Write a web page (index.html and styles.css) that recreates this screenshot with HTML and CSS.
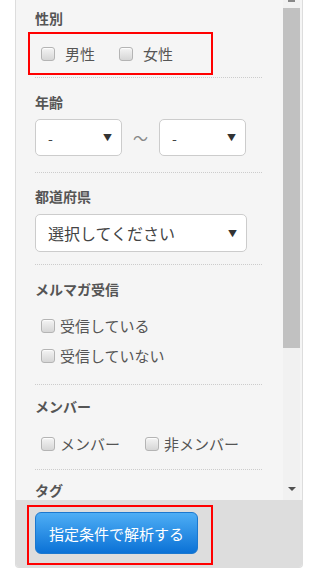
FILE: index.html
```html
<!DOCTYPE html>
<html lang="ja">
<head>
  <meta charset="UTF-8" />
  <meta name="viewport" content="width=device-width, initial-scale=1.0"/>
  <title>解析条件</title>
  <link rel="stylesheet" href="styles.css">
</head>
<body>

<div class="panel">
  <div class="scroll-area">
    <div class="filters">

      <div class="field field-first">
        <h3>性別</h3>
        <div class="highlight gender">
          <label class="check"><span class="box"></span>男性</label>
          <label class="check"><span class="box"></span>女性</label>
        </div>
      </div>

      <div class="field">
        <h3>年齢</h3>
        <div class="range">
          <div class="select small"><span>-</span><span class="arrow">▼</span></div>
          <span class="tilde">～</span>
          <div class="select small"><span>-</span><span class="arrow">▼</span></div>
        </div>
      </div>

      <div class="field field-pref">
        <h3>都道府県</h3>
        <div class="select wide"><span>選択してください</span><span class="arrow">▼</span></div>
      </div>

      <div class="field field-checks">
        <h3>メルマガ受信</h3>
        <div class="checks">
          <label class="check"><span class="box"></span>受信している</label>
          <label class="check"><span class="box"></span>受信していない</label>
        </div>
      </div>

      <div class="field field-member">
        <h3>メンバー</h3>
        <div class="checks inline">
          <label class="check"><span class="box"></span>メンバー</label>
          <label class="check"><span class="box"></span>非メンバー</label>
        </div>
      </div>

      <div class="field field-last">
        <h3>タグ</h3>
      </div>

    </div>

    <div class="scrollbar">
      <div class="sb-up"></div>
      <div class="sb-thumb"></div>
      <div class="sb-rest"><span class="sb-down"></span></div>
    </div>
  </div>

  <div class="panel-footer">
    <div class="highlight submit-wrap">
      <button type="button" class="submit">指定条件で解析する</button>
    </div>
  </div>
</div>

</body>
</html>
```

FILE: styles.css
```css
body {
  margin: 0;
  background: #fff;
  font-family: "Noto Sans CJK JP", "Noto Sans", sans-serif;
  color: #555;
}

.panel {
  width: 286px;
  margin-left: 15px;
  border: 1px solid #ddd;
  border-top: none;
  border-radius: 0 0 4px 4px;
  background: #f5f5f5;
  overflow: hidden;
}

.scroll-area {
  display: flex;
  height: 500px;
}

.filters {
  width: 267px;
  overflow: hidden;
}

.field {
  margin: 0 21px 0 19px;
  padding: 14px 0 16px;
  border-bottom: 1px dotted #ccc;
}

.field h3 {
  margin: 0 0 7px;
  font-size: 14px;
  line-height: 20px;
  font-weight: bold;
  color: #555;
}

.field-first {
  padding-top: 8px;
  padding-bottom: 2px;
}

.field-first h3 {
  margin-bottom: 4px;
}

.field-pref {
  padding-top: 13px;
  padding-bottom: 12px;
}

.field-pref h3 {
  margin-bottom: 8px;
}

.field-checks {
  padding-bottom: 13px;
}

.field-member {
  padding-top: 11px;
  padding-bottom: 10px;
}

.field-last {
  border-bottom: none;
  padding-top: 10px;
}

.highlight {
  border: 2px solid #f00;
}

.gender {
  display: flex;
  gap: 24px;
  box-sizing: border-box;
  width: 185px;
  height: 43px;
  margin-left: -7px;
  padding-left: 11px;
  align-items: center;
}

.gender .check {
  gap: 10px;
}

.check {
  display: flex;
  align-items: center;
  gap: 5px;
  font-size: 15px;
  line-height: 30px;
  color: #555;
}

.box {
  width: 12px;
  height: 12px;
  border: 1px solid #b4b4b4;
  border-radius: 3px;
  background: linear-gradient(#f4f4f4, #d6d6d6);
  box-shadow: inset 0 1px 1px rgba(255, 255, 255, 0.8);
}

.checks {
  padding: 5px 0 0 6px;
}

.checks.inline {
  display: flex;
  gap: 25px;
  padding-top: 6px;
}

.range {
  display: flex;
  align-items: center;
  gap: 11px;
}

.select {
  display: flex;
  align-items: center;
  justify-content: space-between;
  box-sizing: border-box;
  border: 1px solid #ccc;
  border-radius: 5px;
  background: #fff;
  padding: 0 9px 0 12px;
  color: #444;
}

.select.small {
  width: 87px;
  height: 37px;
  font-size: 14px;
}

.select.wide {
  width: 212px;
  height: 38px;
  font-size: 16px;
}

.arrow {
  font-size: 9px;
  color: #333;
}

.tilde {
  font-size: 15px;
  color: #888;
}

.scrollbar {
  display: flex;
  flex-direction: column;
  width: 17px;
  background: #f1f1f1;
}

.sb-up {
  height: 8px;
  display: flex;
  justify-content: center;
}

.sb-up::before {
  content: "";
  width: 7px;
  height: 2px;
  background: #888;
}

.sb-thumb {
  height: 340px;
  background: #c1c1c1;
}

.sb-rest {
  flex: 1;
  display: flex;
  align-items: flex-end;
  justify-content: center;
  padding-bottom: 9px;
}

.sb-down {
  width: 0;
  height: 0;
  border-left: 4px solid transparent;
  border-right: 4px solid transparent;
  border-top: 4px solid #505050;
}

.panel-footer {
  background: #ddd;
  height: 67px;
  padding: 5px 0 0 11px;
  box-sizing: border-box;
}

.submit-wrap {
  width: 186px;
  height: 60px;
  padding: 5px 0 0 6px;
  box-sizing: border-box;
}

.submit {
  width: 163px;
  height: 42px;
  border: 1px solid #1b78cf;
  border-radius: 6px;
  background: linear-gradient(#4eaef5, #0b72d6);
  color: #fff;
  font-family: "Noto Sans CJK JP", "Noto Sans", sans-serif;
  font-size: 15px;
  cursor: pointer;
  padding: 0;
}
```
